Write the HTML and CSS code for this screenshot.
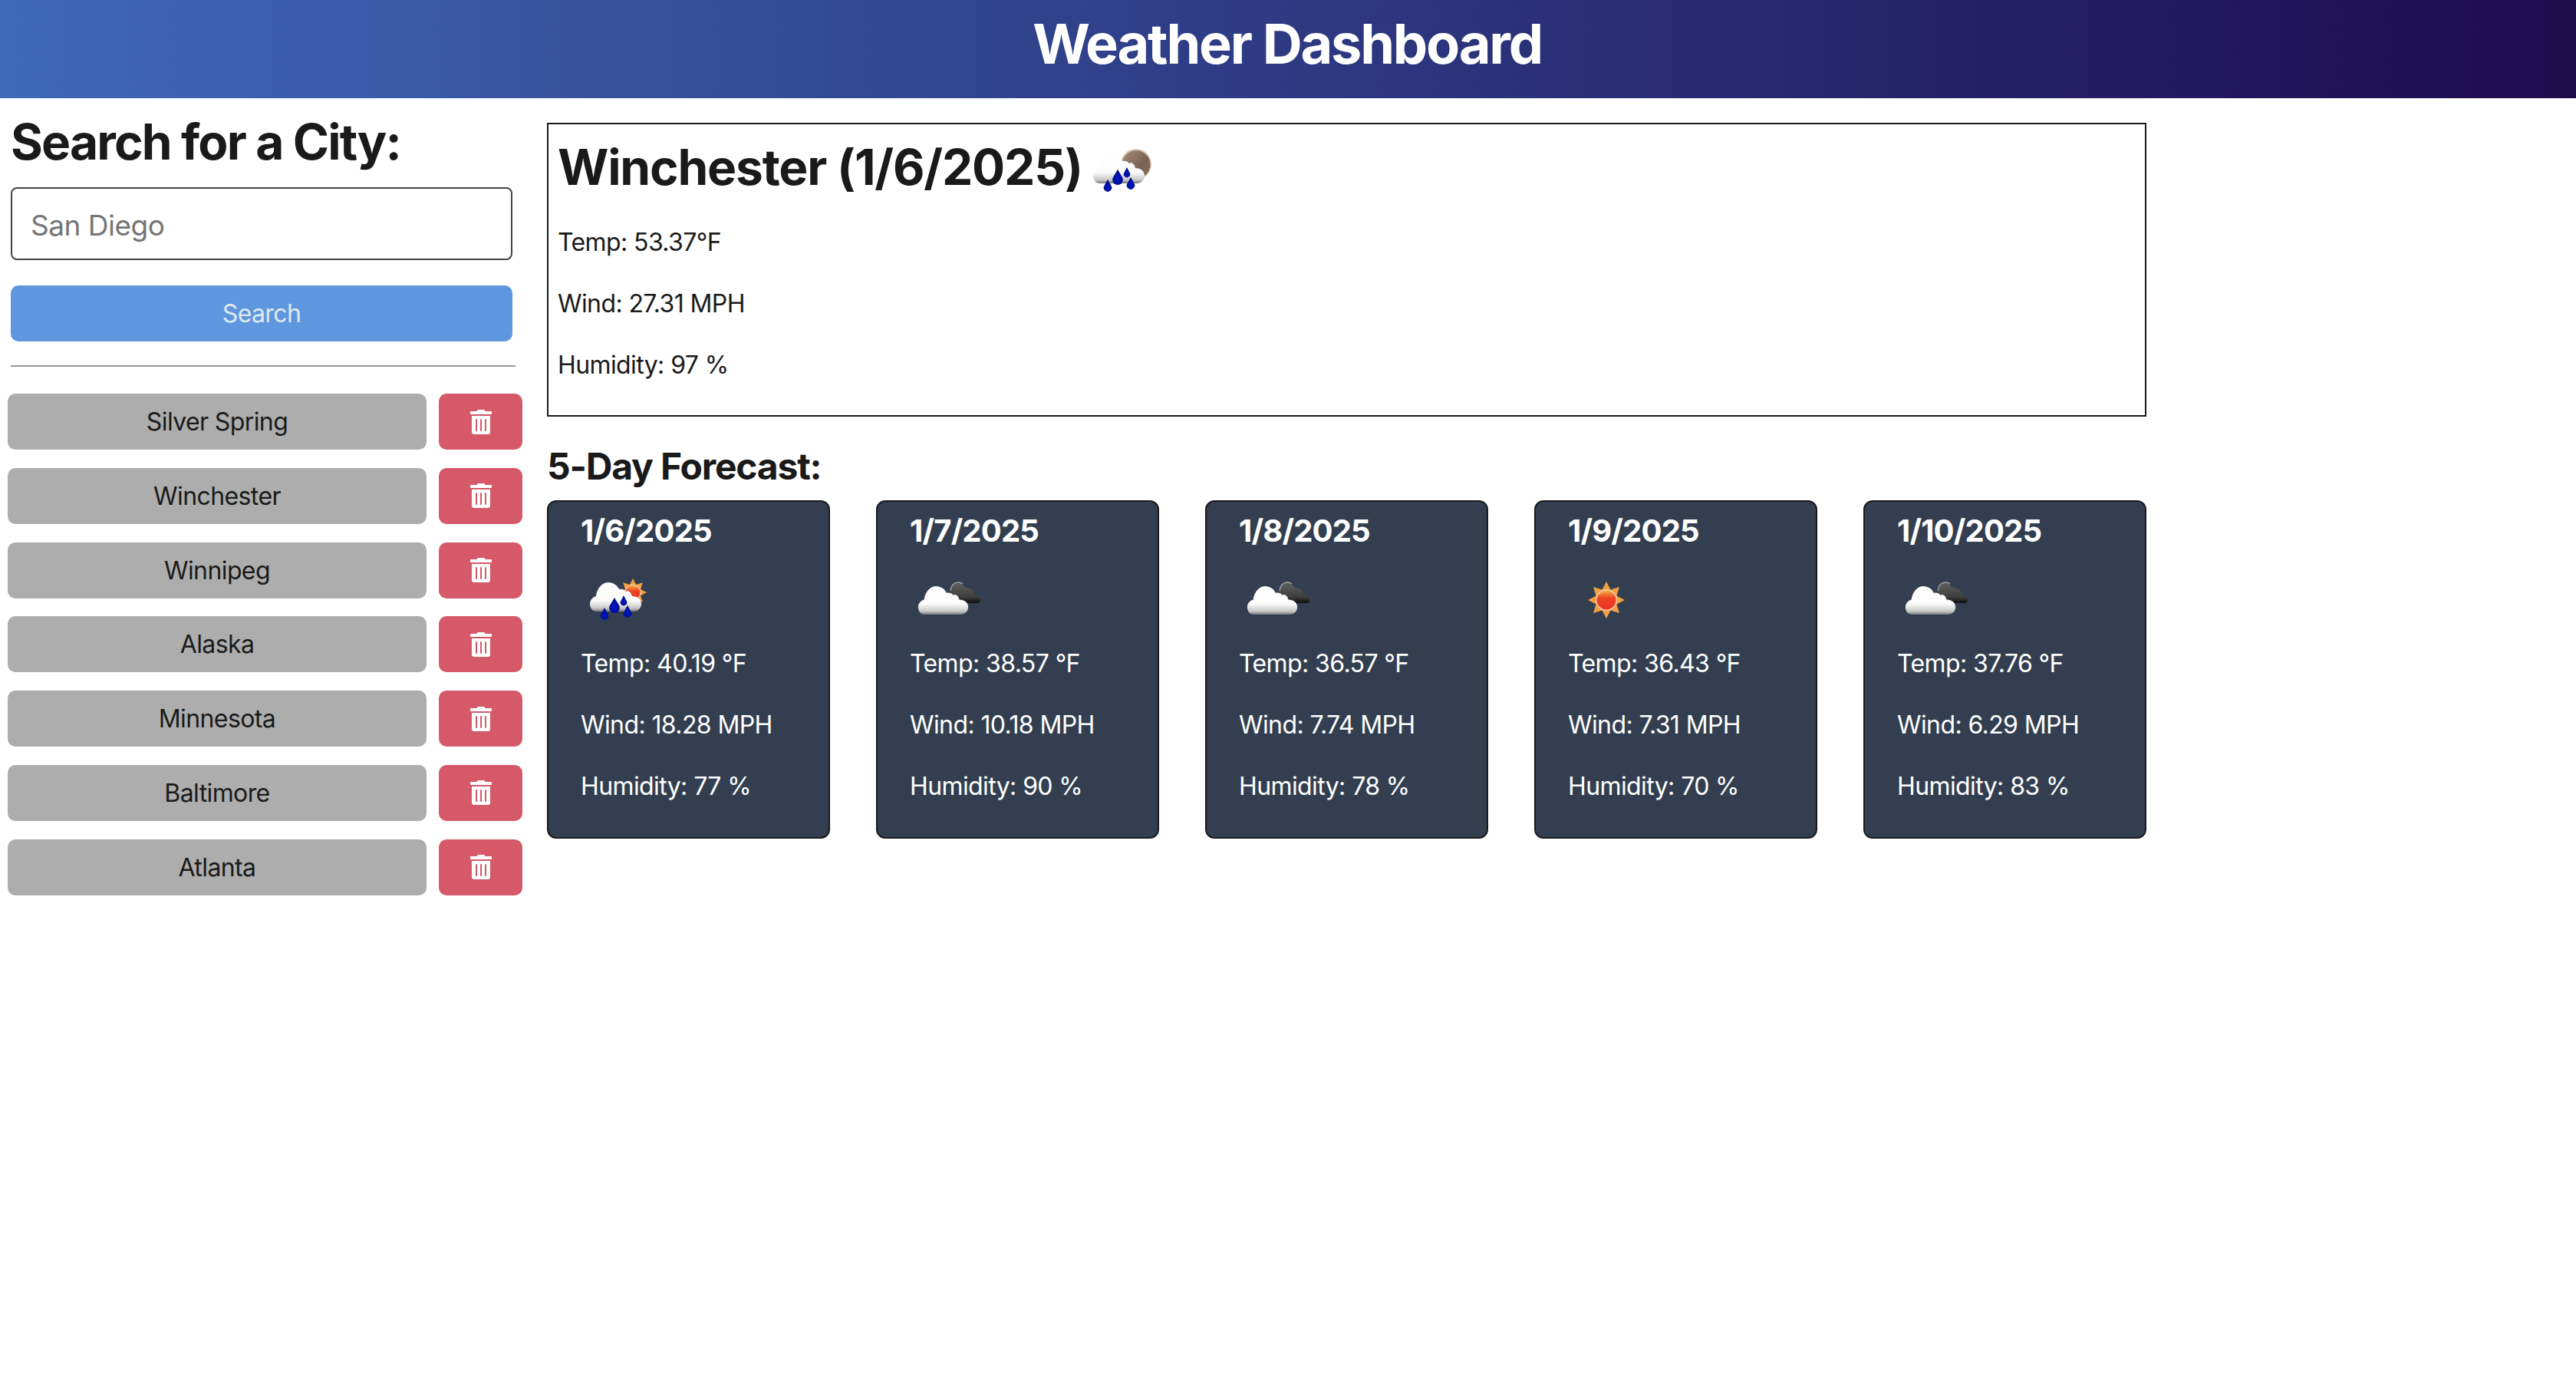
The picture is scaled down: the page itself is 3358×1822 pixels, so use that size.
FILE: index.html
```html
<!DOCTYPE html>
<html lang="en">
<head>
<meta charset="utf-8">
<title>Weather Dashboard</title>
<link rel="stylesheet" href="styles.css">
</head>
<body>
<svg class="defs" width="0" height="0" aria-hidden="true">
  <defs>
    <linearGradient id="cloudWhite" x1="0" y1="0" x2="0" y2="1">
      <stop offset="0" stop-color="#ffffff"/><stop offset=".62" stop-color="#fbfbfb"/><stop offset=".88" stop-color="#c8c8c8"/><stop offset="1" stop-color="#777777"/>
    </linearGradient>
    <linearGradient id="cloudDark" x1="0" y1="0" x2="0" y2="1">
      <stop offset="0" stop-color="#5e5e5e"/><stop offset=".7" stop-color="#3e3e3e"/><stop offset="1" stop-color="#0e0e0e"/>
    </linearGradient>
    <linearGradient id="sunBody" x1="0" y1="0" x2="0" y2="1">
      <stop offset="0" stop-color="#f3b24a"/><stop offset=".42" stop-color="#ee3f24"/><stop offset="1" stop-color="#ea3323"/>
    </linearGradient>
    <linearGradient id="moonBody" x1="0" y1="0" x2="1" y2="1">
      <stop offset="0" stop-color="#a58f7c"/><stop offset=".6" stop-color="#7a6252"/><stop offset="1" stop-color="#86705f"/>
    </linearGradient>
    <radialGradient id="drop" cx=".5" cy=".62" r=".55">
      <stop offset="0" stop-color="#0017c8"/><stop offset=".75" stop-color="#00109a"/><stop offset="1" stop-color="#000a5a"/>
    </radialGradient>
    <symbol id="sun" viewBox="0 0 48 48">
      <path fill="#f3a042" d="M24 0L29.500 10.600 41 7 37.400 18.500 48 24 37.400 29.500 41 41 29.500 37.400 24 48 18.500 37.400 7 41 10.600 29.500 0 24 10.600 18.500 7 7 18.500 10.600z"/>
      <circle cx="24" cy="24" r="14" fill="#f5c9a8"/>
      <circle cx="24" cy="24" r="12.500" fill="url(#sunBody)"/>
    </symbol>
    <symbol id="cloud" viewBox="0 0 67 38">
      <path fill="url(#cloudWhite)" d="M9 38C3 38 0 33 0 28 0 23 4 19 8 18 9 8 16 0 24 0 30 0 36 4 38 9 41 8 45 9 47 12 50 10 54 13 55 18 62 18 67 22 67 28 67 34 62 38 57 38z"/>
    </symbol>
    <symbol id="drops" viewBox="0 0 100 100">
      <path fill="url(#drop)" d="M31 60l4.500 8a5.200 5.200 0 1 1-9 0z"/>
      <path fill="url(#drop)" d="M44 47l6 10a6.800 6.800 0 1 1-12 0z"/>
      <path fill="url(#drop)" d="M56 44l3.600 7a4.200 4.200 0 1 1-7.200 0z"/>
      <path fill="url(#drop)" d="M61 57l4.500 8a5.200 5.200 0 1 1-9 0z"/>
    </symbol>
    <symbol id="icon-broken" viewBox="0 0 100 100">
      <path fill="url(#cloudDark)" d="M58 54C54 54 52 50 52 46 52 42 52 36 56 31 60 26 67 27 70 31 73 35 75 34 78 35 82 36 84 39 84 43 88 43 92 46 92 50 92 53 90 54 88 54z"/>
      <path fill="none" stroke="#a0a0a0" stroke-width="1.500" d="M53 38C54 31 58 27 63 27 65 27 67 27.500 69 29"/>
      <use href="#cloud" x="10" y="32" width="67" height="37"/>
    </symbol>
    <symbol id="icon-rain-day" viewBox="0 0 100 100">
      <use href="#sun" x="50" y="22" width="36" height="36"/>
      <use href="#cloud" x="12" y="27" width="67" height="38"/>
      <use href="#drops" x="0" y="0" width="100" height="100"/>
    </symbol>
    <symbol id="icon-rain-night" viewBox="0 0 100 100">
      <circle cx="68" cy="40" r="20" fill="#d8c8b6"/>
      <circle cx="68" cy="40.500" r="18.500" fill="url(#moonBody)"/>
      <use href="#cloud" x="12" y="27" width="67" height="38"/>
      <use href="#drops" x="0" y="0" width="100" height="100"/>
    </symbol>
    <symbol id="icon-clear" viewBox="0 0 100 100">
      <use href="#sun" x="26" y="26" width="48" height="48"/>
    </symbol>
    <symbol id="icon-trash" viewBox="0 0 448 512">
      <path fill="currentColor" d="M32 464a48 48 0 0 0 48 48h288a48 48 0 0 0 48-48V128H32zm272-256a16 16 0 0 1 32 0v224a16 16 0 0 1-32 0zm-96 0a16 16 0 0 1 32 0v224a16 16 0 0 1-32 0zm-96 0a16 16 0 0 1 32 0v224a16 16 0 0 1-32 0zM432 32H312l-9.400-18.700A24 24 0 0 0 281.100 0H166.800a23.720 23.720 0 0 0-21.400 13.300L136 32H16A16 16 0 0 0 0 48v32a16 16 0 0 0 16 16h416a16 16 0 0 0 16-16V48a16 16 0 0 0-16-16z"/>
    </symbol>
  </defs>
</svg>

<header class="site-header"><h1 class="site-title">Weather Dashboard</h1></header>

<div class="layout">
  <aside class="sidebar">
    <h2 class="search-title">Search for a City:</h2>
    <form class="search-form">
      <input class="search-input" type="text" placeholder="San Diego">
      <button class="search-btn" type="button">Search</button>
    </form>
    <hr class="divider">
    <ul class="history">
      <li class="history-row"><button class="city-btn" type="button">Silver Spring</button><button class="del-btn" type="button" aria-label="Delete"><svg class="trash"><use href="#icon-trash"/></svg></button></li>
      <li class="history-row"><button class="city-btn" type="button">Winchester</button><button class="del-btn" type="button" aria-label="Delete"><svg class="trash"><use href="#icon-trash"/></svg></button></li>
      <li class="history-row"><button class="city-btn" type="button">Winnipeg</button><button class="del-btn" type="button" aria-label="Delete"><svg class="trash"><use href="#icon-trash"/></svg></button></li>
      <li class="history-row"><button class="city-btn" type="button">Alaska</button><button class="del-btn" type="button" aria-label="Delete"><svg class="trash"><use href="#icon-trash"/></svg></button></li>
      <li class="history-row"><button class="city-btn" type="button">Minnesota</button><button class="del-btn" type="button" aria-label="Delete"><svg class="trash"><use href="#icon-trash"/></svg></button></li>
      <li class="history-row"><button class="city-btn" type="button">Baltimore</button><button class="del-btn" type="button" aria-label="Delete"><svg class="trash"><use href="#icon-trash"/></svg></button></li>
      <li class="history-row"><button class="city-btn" type="button">Atlanta</button><button class="del-btn" type="button" aria-label="Delete"><svg class="trash"><use href="#icon-trash"/></svg></button></li>
    </ul>
  </aside>

  <main class="content">
    <section class="current">
      <div class="current-head">
        <h2 class="current-title">Winchester (1/6/2025)</h2>
        <svg class="wicon"><use href="#icon-rain-night"/></svg>
      </div>
      <p class="stat">Temp: 53.37°F</p>
      <p class="stat">Wind: 27.31 MPH</p>
      <p class="stat">Humidity: 97 %</p>
    </section>

    <h3 class="forecast-title">5-Day Forecast:</h3>
    <div class="forecast">
      <article class="card">
        <h4 class="card-date">1/6/2025</h4>
        <svg class="wicon"><use href="#icon-rain-day"/></svg>
        <p class="card-stat">Temp: 40.19 °F</p>
        <p class="card-stat">Wind: 18.28 MPH</p>
        <p class="card-stat">Humidity: 77 %</p>
      </article>
      <article class="card">
        <h4 class="card-date">1/7/2025</h4>
        <svg class="wicon"><use href="#icon-broken"/></svg>
        <p class="card-stat">Temp: 38.57 °F</p>
        <p class="card-stat">Wind: 10.18 MPH</p>
        <p class="card-stat">Humidity: 90 %</p>
      </article>
      <article class="card">
        <h4 class="card-date">1/8/2025</h4>
        <svg class="wicon"><use href="#icon-broken"/></svg>
        <p class="card-stat">Temp: 36.57 °F</p>
        <p class="card-stat">Wind: 7.74 MPH</p>
        <p class="card-stat">Humidity: 78 %</p>
      </article>
      <article class="card">
        <h4 class="card-date">1/9/2025</h4>
        <svg class="wicon"><use href="#icon-clear"/></svg>
        <p class="card-stat">Temp: 36.43 °F</p>
        <p class="card-stat">Wind: 7.31 MPH</p>
        <p class="card-stat">Humidity: 70 %</p>
      </article>
      <article class="card">
        <h4 class="card-date">1/10/2025</h4>
        <svg class="wicon"><use href="#icon-broken"/></svg>
        <p class="card-stat">Temp: 37.76 °F</p>
        <p class="card-stat">Wind: 6.29 MPH</p>
        <p class="card-stat">Humidity: 83 %</p>
      </article>
    </div>
  </main>
</div>
</body>
</html>
```

FILE: styles.css
```css
* { box-sizing: border-box; }
html, body { margin: 0; padding: 0; background: #fff; }
body { font-family: Inter, "Liberation Sans", sans-serif; font-size: 32px; line-height: 48px; letter-spacing: -.6px; color: #1a1a1a; }
.defs { position: absolute; }

.site-header { height: 128px; padding-bottom: 14px; display: flex; align-items: center; justify-content: center; background: linear-gradient(to right, #3f68b8, #1d0b4d); }
.site-title { margin: 0 2px 0 0; font-size: 72px; line-height: 112px; font-weight: 700; color: #fff; letter-spacing: -2.2px; }

.layout { display: flex; align-items: flex-start; }
.sidebar { width: 713px; flex: none; padding: 14px 0 0 10px; }
.search-title { margin: 0 0 16px 4px; font-size: 64px; line-height: 86px; font-weight: 700; letter-spacing: -1.85px; }
.search-form { display: flex; flex-direction: column; gap: 33px; margin-left: 4px; width: 654px; }
.search-input { height: 95px; padding: 3px 24px 0; border: 2px solid #444; border-radius: 8px; font: 400 37px Inter, sans-serif; letter-spacing: -.5px; color: #222; background: #fff; outline: none; }
.search-input::placeholder { color: #757575; opacity: 1; }
.search-btn { height: 73px; border: 0; border-radius: 10px; background: #5f97df; color: #dfe9f0; font: 400 32px Inter, sans-serif; letter-spacing: -.6px; }
.divider { width: 658px; margin: 31px 0 35px 4px; border: 0; border-top: 2px solid #999; }
.history { list-style: none; margin: 0; padding: 0; display: flex; flex-direction: column; gap: 23.8px; }
.history-row { display: flex; gap: 16px; }
.city-btn { width: 546px; height: 73px; border: 0; border-radius: 10px; background: #adadad; color: #1a1a1a; font: 400 32px Inter, sans-serif; letter-spacing: -.6px; }
.del-btn { width: 109px; height: 73px; border: 0; border-radius: 10px; background: #d55969; color: #fff; display: flex; align-items: center; justify-content: center; padding: 0; }
.trash { width: 28px; height: 32px; display: block; }

.content { width: 2085px; flex: none; padding-top: 32px; }
.current { height: 383px; border: 2px solid #1a1a1a; padding: 12px; }
.current-head { display: flex; height: 101px; margin-bottom: 17px; }
.current-title { margin: 0 2px 0 0; font-size: 64px; line-height: 88px; font-weight: 700; letter-spacing: -1.2px; }
.stat { margin: 0 0 32px; }
.forecast-title { margin: 32px 0 0; font-size: 48px; line-height: 66px; font-weight: 700; letter-spacing: -1.2px; }
.forecast { display: grid; grid-template-columns: repeat(5, 369px); column-gap: 60px; margin-top: 11px; }
.card { height: 441px; border: 2px solid #1a1a1a; border-radius: 12px; background: #333f50; color: #fff; padding: 10px 0 0 42px; }
.card-date { margin: 0; font-size: 40px; line-height: 56px; font-weight: 700; letter-spacing: -.8px; }
.wicon { width: 100px; height: 100px; display: block; flex: none; filter: blur(.5px); }
.card .wicon { margin-top: 12px; }
.card-stat { margin: 0 0 32px; }
.card .wicon + .card-stat { margin-top: 9px; }
```
